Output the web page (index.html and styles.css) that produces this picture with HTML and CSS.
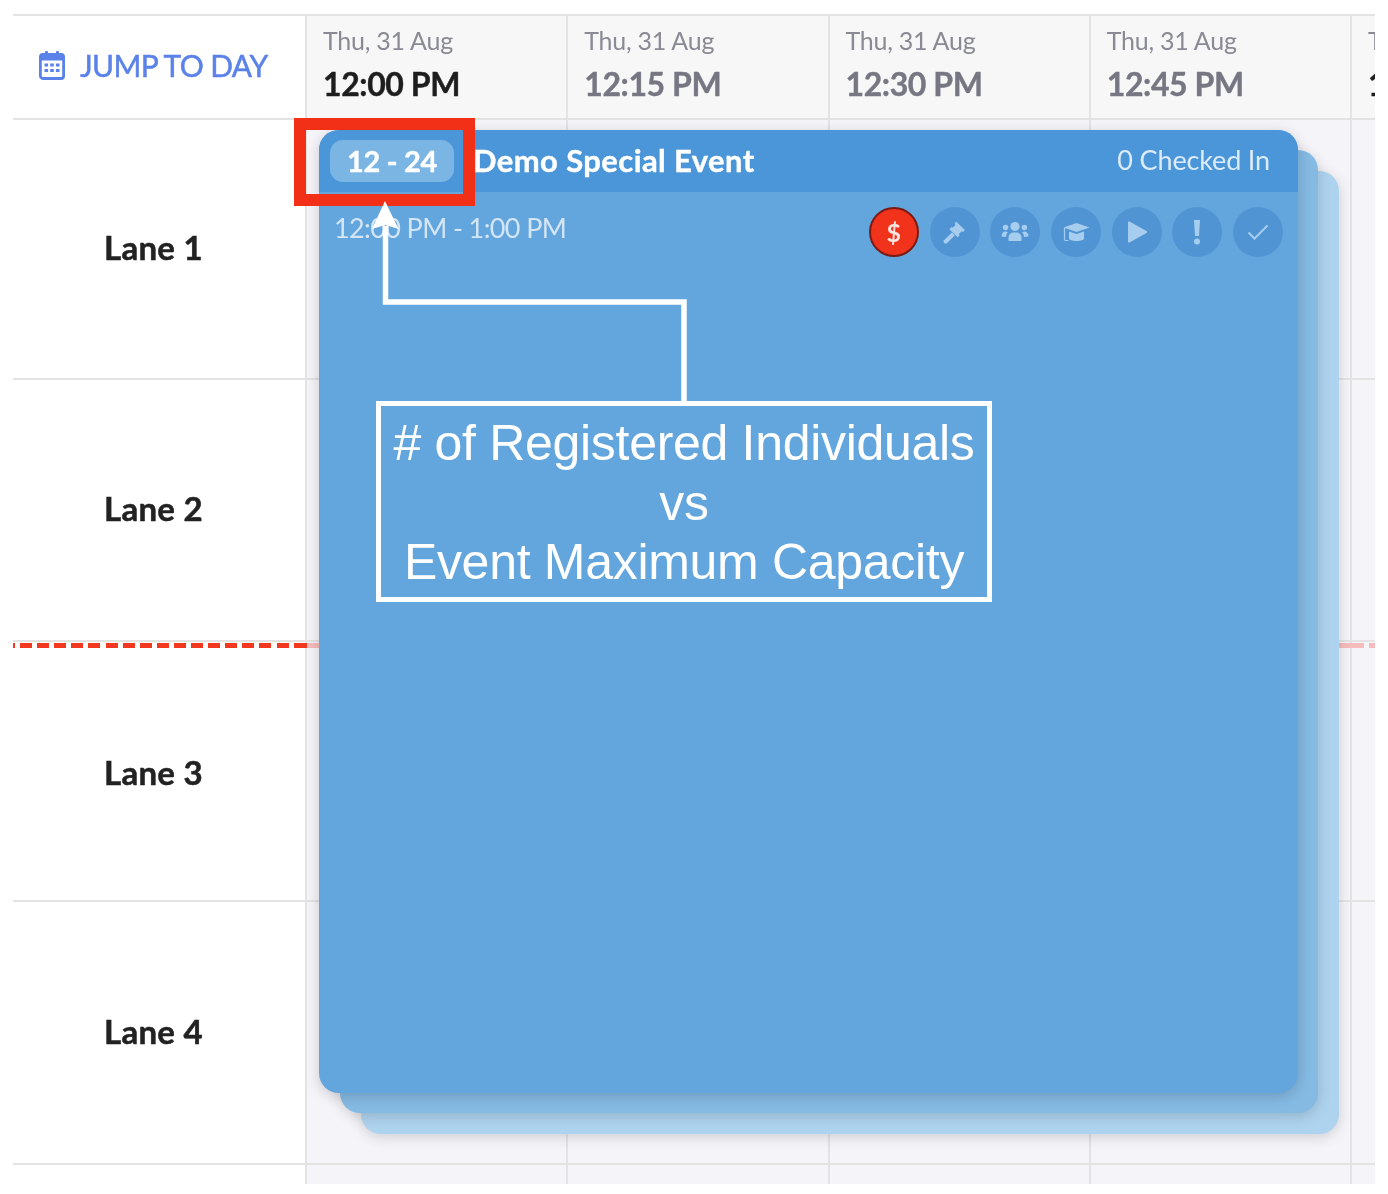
FILE: index.html
```html
<!DOCTYPE html>
<html lang="en">
<head>
    <meta charset="UTF-8">
    <meta name="viewport" content="width=device-width, initial-scale=1.0">
    <title>Lane Schedule</title>
    <link rel="stylesheet" href="styles.css">
</head>
<body>
    <div class="page">
        <div class="schedule">
            <div class="corner">
                <svg class="cal-icon" viewBox="0 0 26 30" width="26" height="30">
                    <rect x="1.400" y="4.500" width="23.200" height="24" rx="2.500" fill="none" stroke="#5b82e8" stroke-width="2.800"/>
                    <rect x="1.400" y="4.500" width="23.200" height="6" fill="#5b82e8"/>
                    <rect x="6" y="1" width="3" height="6" rx="1" fill="#5b82e8"/>
                    <rect x="17" y="1" width="3" height="6" rx="1" fill="#5b82e8"/>
                    <path d="M5.500 13.500h3.600v3H5.500zM11.200 13.500h3.600v3h-3.600zM16.900 13.500h3.600v3h-3.600zM5.500 19h3.600v3H5.500zM11.200 19h3.600v3h-3.600zM16.900 19h3.600v3h-3.600z" fill="#5b82e8"/>
                </svg>
                <span class="jump">JUMP TO DAY</span>
            </div>
            <div class="head-cell"><div class="day">Thu, 31 Aug</div><div class="time current">12:00 PM</div></div>
            <div class="head-cell"><div class="day">Thu, 31 Aug</div><div class="time">12:15 PM</div></div>
            <div class="head-cell"><div class="day">Thu, 31 Aug</div><div class="time">12:30 PM</div></div>
            <div class="head-cell"><div class="day">Thu, 31 Aug</div><div class="time">12:45 PM</div></div>
            <div class="head-cell last"><div class="day">Thu, 31 Aug</div><div class="time current">1:00 PM</div></div>

            <div class="lane">Lane 1</div>
            <div class="slot"></div><div class="slot"></div><div class="slot"></div><div class="slot"></div><div class="slot last"></div>
            <div class="lane">Lane 2</div>
            <div class="slot"></div><div class="slot"></div><div class="slot"></div><div class="slot"></div><div class="slot last"></div>
            <div class="lane low">Lane 3</div>
            <div class="slot"></div><div class="slot"></div><div class="slot"></div><div class="slot"></div><div class="slot last"></div>
            <div class="lane">Lane 4</div>
            <div class="slot"></div><div class="slot"></div><div class="slot"></div><div class="slot"></div><div class="slot last"></div>
            <div class="lane end"></div>
            <div class="slot end"></div><div class="slot end"></div><div class="slot end"></div><div class="slot end"></div><div class="slot end last"></div>
        </div>

        <!-- now marker -->
        <div class="now-line"></div>
        <div class="now-dashes"></div>

        <!-- stacked event cards -->
        <div class="card-back third"></div>
        <div class="card-back second"></div>
        <div class="card">
            <div class="card-head">
                <span class="badge">12 - 24</span>
                <span class="title">Demo Special Event</span>
                <span class="checked">0 Checked In</span>
            </div>
            <div class="card-body">
                <span class="hours">12:00 PM - 1:00 PM</span>
                <div class="actions">
                    <span class="action red">$</span>
                    <span class="action">
                        <svg viewBox="0 0 24 24" width="25" height="25"><path d="M13.500 1.500l8.500 8-2 2-1-.8-2.800 2.800 .7 1.100-2 2-7.800-7.800 2-2 1.100.7 2.800-2.800-.8-1z" fill="#a6cdee"/><path d="M9.500 12l2.800 2.800-7.600 7.400a2 2 0 0 1-2.800-2.800z" fill="#a6cdee"/></svg>
                    </span>
                    <span class="action">
                        <svg viewBox="0 0 28 22" width="28" height="22"><circle cx="14" cy="5.500" r="4.600" fill="#a6cdee"/><circle cx="4.600" cy="6.500" r="2.700" fill="#a6cdee"/><circle cx="23.400" cy="6.500" r="2.700" fill="#a6cdee"/><path d="M7.500 20v-3.500c0-3 2.500-5 5-5h3c2.500 0 5 2 5 5V20zM0.500 15.500c0-3 1.500-5 4-5 1 0 1.800.3 2.400.8-1.200 1.200-1.800 2.800-1.800 4.700zM27.500 15.500c0-3-1.500-5-4-5-1 0-1.800.3-2.400.8 1.200 1.200 1.800 2.800 1.800 4.700z" fill="#a6cdee"/></svg>
                    </span>
                    <span class="action">
                        <svg viewBox="0 0 28 22" width="28" height="22"><path d="M14.500 2L27.500 6.500 14.500 11 1.500 6.500z" fill="#a6cdee"/><path d="M7 10.500v7c0 1.500 3 2.500 7.500 2.500s7.500-1 7.500-2.500v-7l-7.500 2.600z" fill="#a6cdee"/><path d="M2.500 7v12M2.500 19.500h4" fill="none" stroke="#a6cdee" stroke-width="1.200"/></svg>
                    </span>
                    <span class="action">
                        <svg viewBox="0 0 22 24" width="22" height="24"><path d="M2 2.500a1 1 0 0 1 1.500-.9l17 9.500a1 1 0 0 1 0 1.800l-17 9.500A1 1 0 0 1 2 21.500z" fill="#a6cdee"/></svg>
                    </span>
                    <span class="action">
                        <svg viewBox="0 0 8 26" width="8" height="26"><path d="M1 1h6l-1 16H2z" fill="#a6cdee"/><circle cx="4" cy="22.500" r="3" fill="#a6cdee"/></svg>
                    </span>
                    <span class="action">
                        <svg viewBox="0 0 22 18" width="22" height="18"><path d="M1.500 9.500l6 6L20.500 2.500" fill="none" stroke="#a6cdee" stroke-width="2"/></svg>
                    </span>
                </div>
            </div>
        </div>

        <!-- annotation drawn on top of the screenshot -->
        <div class="highlight"></div>
        <svg class="arrow" viewBox="0 0 1388 1194" width="1388" height="1194">
            <path d="M385.500 226V302H684V403" fill="none" stroke="#fff" stroke-width="5.500"/>
            <path d="M385 201L398.500 229L385.500 225L372 229Z" fill="#fff"/>
        </svg>
        <div class="callout">
            <div># of Registered Individuals</div>
            <div>vs</div>
            <div>Event Maximum Capacity</div>
        </div>
    </div>
</body>
</html>
```

FILE: styles.css
```css
body {
    margin: 0;
    background: #fff;
    font-family: "Lato", "Liberation Sans", sans-serif;
}
.page {
    position: relative;
    width: 1388px;
    height: 1194px;
    padding: 14px 0 0 13px;
    box-sizing: border-box;
    overflow: hidden;
}
.schedule {
    display: grid;
    grid-template-columns: 294px repeat(5, 261.25px);
    grid-template-rows: 104px 260px 262px 260px 263px 19px;
    width: 1362px;
    border-top: 2px solid #e3e3e3;
    overflow: hidden;
    filter: blur(0.4px);
}
.corner {
    display: flex;
    align-items: center;
    gap: 15px;
    padding: 0 0 4px 26px;
    border-right: 2px solid #e3e3e3;
    border-bottom: 2px solid #e3e3e3;
}
.cal-icon {
    flex: none;
}
.jump {
    font-size: 30px;
    color: #5b82e8;
    letter-spacing: -0.6px;
    -webkit-text-stroke: 0.5px #5b82e8;
    white-space: nowrap;
}
.head-cell {
    padding: 8px 0 0 16px;
    background: #f7f7f7;
    border-right: 2px solid #e3e3e3;
    border-bottom: 2px solid #e3e3e3;
    white-space: nowrap;
    overflow: hidden;
}
.day {
    font-size: 25px;
    line-height: 32px;
    color: #8a8a94;
    letter-spacing: -0.25px;
}
.time {
    margin-top: 9px;
    font-size: 32px;
    line-height: 38px;
    font-weight: 700;
    color: #777783;
    letter-spacing: -0.4px;
    -webkit-text-stroke: 0.4px;
}
.time.current {
    color: #1e1e1e;
}
.lane {
    display: flex;
    align-items: center;
    justify-content: center;
    padding: 0 11px 4px 0;
    font-size: 33px;
    font-weight: 700;
    color: #222;
    letter-spacing: 0.3px;
    -webkit-text-stroke: 0.5px;
    border-right: 2px solid #e3e3e3;
    border-bottom: 2px solid #e3e3e3;
}
.lane.low {
    padding: 2px 11px 0 0;
}
.slot {
    background: #f4f4f9;
    border-right: 2px solid #e3e3e3;
    border-bottom: 2px solid #e3e3e3;
}
.last {
    border-right: none;
}
.end {
    border-bottom: none;
}

/* now marker */
.now-line {
    position: absolute;
    left: 307px;
    top: 643px;
    width: 1068px;
    height: 5px;
    background: linear-gradient(90deg, #f6bcbc 1057px, transparent 1057px 1062px, #f6bcbc 1062px);
}
.now-dashes {
    position: absolute;
    left: 13px;
    top: 643px;
    width: 294px;
    height: 5px;
    background: repeating-linear-gradient(90deg, #f2391f 0 12px, transparent 12px 17.1px);
    background-position: -10px 0;
    filter: blur(0.4px);
}

/* event cards */
.card-back {
    position: absolute;
    width: 978px;
    height: 963px;
    border-radius: 20px;
    box-shadow: 0 3px 14px rgba(0, 0, 0, 0.16);
}
.card-back.third {
    left: 361px;
    top: 171px;
    background: #aed3ef;
}
.card-back.second {
    left: 340px;
    top: 150px;
    background: #85bae3;
}
.card {
    position: absolute;
    left: 319px;
    top: 130px;
    width: 979px;
    height: 963px;
    border-radius: 20px;
    background: #63a5dd;
    box-shadow: 0 3px 14px rgba(0, 0, 0, 0.18);
    overflow: hidden;
}
.card-head {
    display: flex;
    align-items: center;
    height: 62px;
    padding: 0 28px 0 11px;
    background: #4a96d9;
    color: #fff;
    filter: blur(0.4px);
}
.badge {
    width: 124px;
    height: 42px;
    line-height: 41px;
    text-align: center;
    border-radius: 13px;
    background: #7ab5e4;
    font-size: 29px;
    font-weight: 700;
    letter-spacing: -0.3px;
    -webkit-text-stroke: 0.4px;
}
.title {
    margin: 0 0 3px 19px;
    font-size: 31px;
    font-weight: 700;
    letter-spacing: 0.4px;
    -webkit-text-stroke: 0.4px;
}
.checked {
    margin: 0 0 3px auto;
    font-size: 27px;
    color: #dcebf8;
    letter-spacing: -0.15px;
}
.card-body {
    display: flex;
    justify-content: space-between;
    padding: 15px 15px 0 15px;
    filter: blur(0.4px);
}
.hours {
    margin-top: 4px;
    font-size: 27px;
    line-height: 34px;
    color: #d4e6f6;
    letter-spacing: -0.62px;
}
.actions {
    display: flex;
    gap: 10.700px;
}
.action {
    display: flex;
    align-items: center;
    justify-content: center;
    width: 50px;
    height: 50px;
    border-radius: 50%;
    background: #5094d4;
}
.action.red {
    box-sizing: border-box;
    background: #f2331c;
    border: 2px solid #7d1b12;
    color: #fbe3df;
    font-size: 25px;
    font-weight: 700;
}

/* annotation */
.highlight {
    position: absolute;
    left: 294px;
    top: 118px;
    width: 157px;
    height: 64px;
    border: 12px solid #f23018;
}
.arrow {
    position: absolute;
    left: 0;
    top: 0;
}
.callout {
    position: absolute;
    left: 376px;
    top: 401px;
    width: 616px;
    height: 201px;
    box-sizing: border-box;
    border: 5px solid #fff;
    padding-top: 8px;
    text-align: center;
    color: #fff;
    font-family: "Liberation Sans", Arial, sans-serif;
    font-size: 50px;
    line-height: 59.500px;
    letter-spacing: -0.3px;
}
```
